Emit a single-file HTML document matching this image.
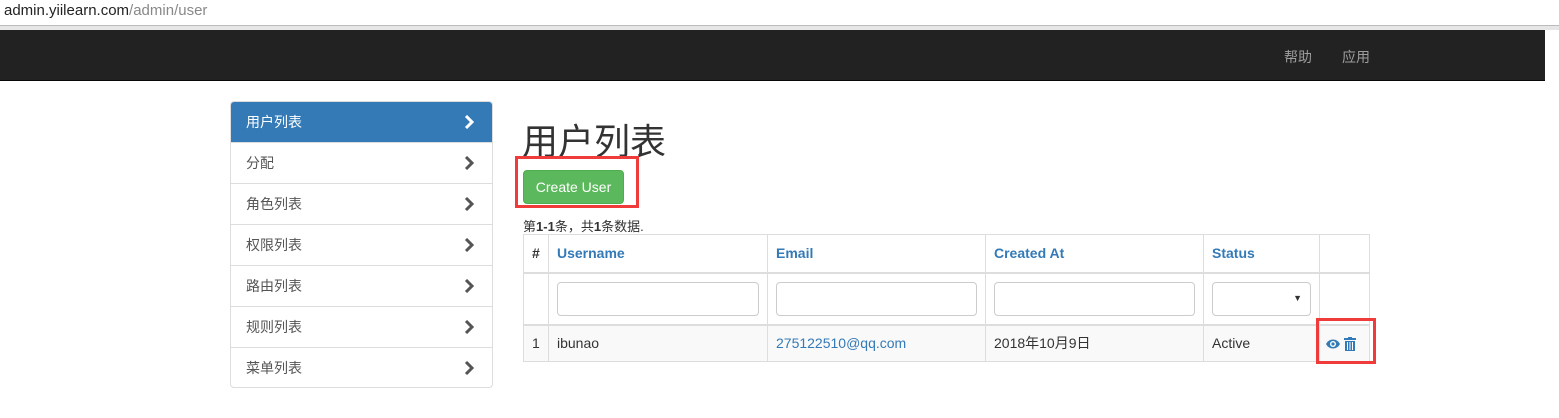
<!DOCTYPE html>
<html><head><meta charset="utf-8"><style>
*{box-sizing:border-box;margin:0;padding:0}
body{width:1559px;height:418px;background:#fff;font-family:"Liberation Sans","Noto Sans CJK SC",sans-serif;font-size:14px;color:#333;position:relative;overflow:hidden}
.abs{position:absolute}
.url{left:4px;top:2px;font-size:15px;color:#222}
.url span{color:#888}
.bar{left:0;top:25px;width:1559px;height:5px;background:#e6e6e6;border-top:1px solid #bbb}
.nav{left:0;top:30px;width:1545px;height:51px;background:#222;border-bottom:1px solid #080808}
.nav a{position:absolute;top:17px;color:#9d9d9d;font-size:14px}
.side{left:230px;top:101px;width:263px;border:1px solid #ddd;border-radius:4px;overflow:hidden}
.side div{height:41px;border-top:1px solid #ddd;padding:10px 15px;position:relative;color:#555}
.side div:first-child{border-top:none;background:#337ab7;color:#fff;height:40px}
.side div:last-child{height:40px}
.side div svg{position:absolute;right:18px;top:13px}
.btn{left:523px;top:170px;width:101px;height:34px;background:#5cb85c;border:1px solid #4cae4c;border-radius:4px;color:#fff;text-align:center;line-height:32px;font-size:14px}
.red{border:3px solid #f03b3b}
table{position:absolute;left:523px;top:234px;width:847px;border-collapse:collapse}
td,th{border:1px solid #ddd;padding:0 8px;text-align:left;font-size:14px}
th{height:38px;color:#337ab7;border-bottom:2px solid #ddd}
th:first-child{color:#333}
.f td{height:52px;border-bottom:2px solid #ddd}
.f input,.f .sel{width:100%;height:34px;border:1px solid #ccc;border-radius:4px;position:relative}
.d td{height:37px;background:#f9f9f9}
a{color:#337ab7;text-decoration:none}
</style></head><body>
<div class="abs url">admin.yiilearn.com<span>/admin/user</span></div>
<div class="abs bar"></div>
<div class="abs nav"><a style="left:1284px">帮助</a><a style="left:1342px">应用</a></div>
<div class="abs side">
<div>用户列表<svg width="10" height="14" viewBox="0 0 10 14"><path d="M2 1l6 6-6 6" stroke="#fff" stroke-width="3" fill="none"/></svg></div>
<div>分配<svg width="10" height="14" viewBox="0 0 10 14"><path d="M2 1l6 6-6 6" stroke="#555" stroke-width="3" fill="none"/></svg></div>
<div>角色列表<svg width="10" height="14" viewBox="0 0 10 14"><path d="M2 1l6 6-6 6" stroke="#555" stroke-width="3" fill="none"/></svg></div>
<div>权限列表<svg width="10" height="14" viewBox="0 0 10 14"><path d="M2 1l6 6-6 6" stroke="#555" stroke-width="3" fill="none"/></svg></div>
<div>路由列表<svg width="10" height="14" viewBox="0 0 10 14"><path d="M2 1l6 6-6 6" stroke="#555" stroke-width="3" fill="none"/></svg></div>
<div>规则列表<svg width="10" height="14" viewBox="0 0 10 14"><path d="M2 1l6 6-6 6" stroke="#555" stroke-width="3" fill="none"/></svg></div>
<div>菜单列表<svg width="10" height="14" viewBox="0 0 10 14"><path d="M2 1l6 6-6 6" stroke="#555" stroke-width="3" fill="none"/></svg></div>
</div>
<div class="abs" style="left:522px;top:113px;font-size:36px;color:#333">用户列表</div>
<div class="abs btn">Create User</div>
<div class="abs red" style="left:515px;top:156px;width:124px;height:52px"></div>
<div class="abs" style="left:523px;top:216px;font-size:13px">第<b>1-1</b>条，共<b>1</b>条数据.</div>
<table>
<tr><th style="width:25px">#</th><th style="width:219px">Username</th><th style="width:218px">Email</th><th style="width:218px">Created At</th><th style="width:116px">Status</th><th></th></tr>
<tr class="f"><td></td><td><input></td><td><input></td><td><input></td><td><div class="sel"><span style="position:absolute;right:8px;top:10px;font-size:9px">▼</span></div></td><td></td></tr>
<tr class="d"><td>1</td><td>ibunao</td><td><a>275122510@qq.com</a></td><td>2018年10月9日</td><td>Active</td><td style="padding:0 6px">
<svg width="14" height="12" viewBox="0 0 14 12" style="vertical-align:middle"><path d="M0 6C3 0 11 0 14 6C11 12 3 12 0 6Z" fill="#337ab7"/><circle cx="7" cy="6" r="3" fill="#fff"/><circle cx="7" cy="6" r="1.6" fill="#337ab7"/></svg>
<svg width="12" height="14" viewBox="0 0 12 14" style="vertical-align:middle"><rect x="0" y="1" width="12" height="2" fill="#337ab7"/><rect x="4" y="0" width="4" height="2" fill="#337ab7"/><path d="M1 4h10v10H1z" fill="#337ab7"/><path d="M3.5 5v8M6 5v8M8.5 5v8" stroke="#fff" stroke-width="1"/></svg>
</td></tr>
</table>
<div class="abs red" style="left:1316px;top:318px;width:60px;height:46px"></div>
</body></html>
